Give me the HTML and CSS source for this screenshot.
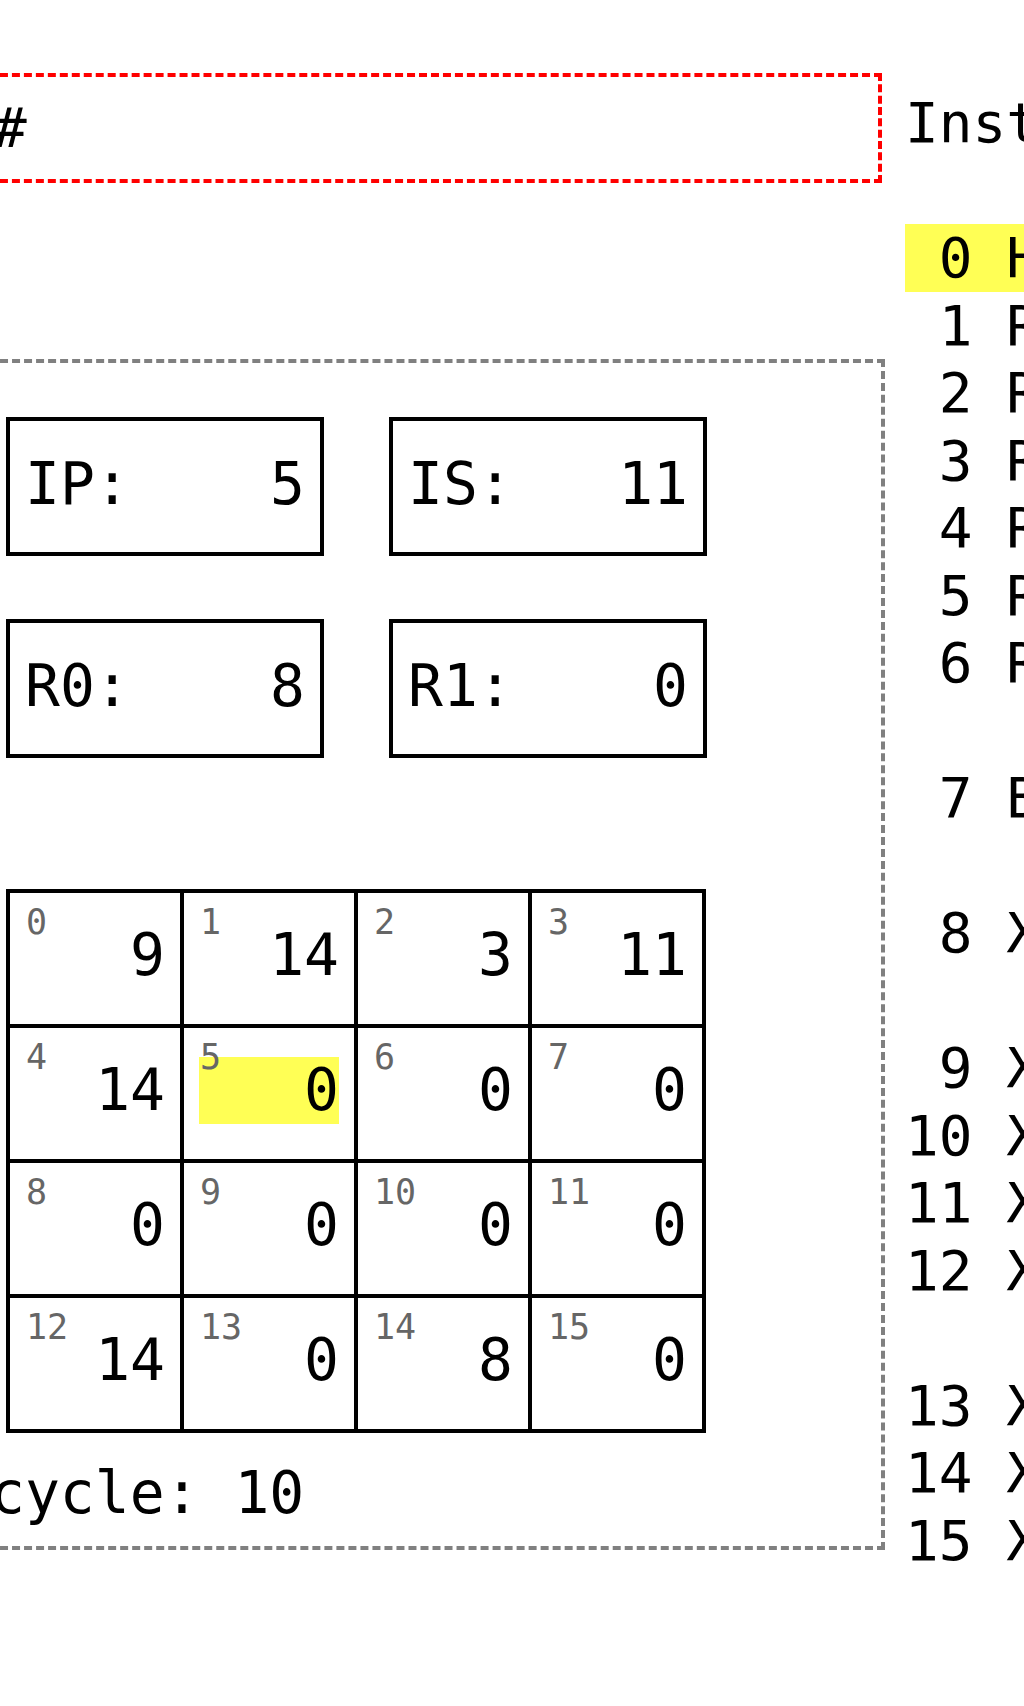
FILE: index.html
```html
<!DOCTYPE html>
<html lang="en">
<head>
  <meta charset="UTF-8">
  <meta name="viewport" content="width=device-width, initial-scale=1.0">
  <title>Tiny Machine</title>
  <link rel="stylesheet" href="styles.css">
</head>
<body>
  <div class="page">
    <div class="machine">
      <div class="program">#</div>

      <div class="state">
        <div class="registers">
          <div class="reg"><span>IP:</span><span>5</span></div>
          <div class="reg"><span>IS:</span><span>11</span></div>
          <div class="reg"><span>R0:</span><span>8</span></div>
          <div class="reg"><span>R1:</span><span>0</span></div>
        </div>

        <div class="memory">
          <div class="cell"><span class="addr">0</span><div class="val">9</div></div>
          <div class="cell"><span class="addr">1</span><div class="val">14</div></div>
          <div class="cell"><span class="addr">2</span><div class="val">3</div></div>
          <div class="cell"><span class="addr">3</span><div class="val">11</div></div>
          <div class="cell"><span class="addr">4</span><div class="val">14</div></div>
          <div class="cell"><span class="addr">5</span><div class="val current">0</div></div>
          <div class="cell"><span class="addr">6</span><div class="val">0</div></div>
          <div class="cell"><span class="addr">7</span><div class="val">0</div></div>
          <div class="cell"><span class="addr">8</span><div class="val">0</div></div>
          <div class="cell"><span class="addr">9</span><div class="val">0</div></div>
          <div class="cell"><span class="addr">10</span><div class="val">0</div></div>
          <div class="cell"><span class="addr">11</span><div class="val">0</div></div>
          <div class="cell"><span class="addr">12</span><div class="val">14</div></div>
          <div class="cell"><span class="addr">13</span><div class="val">0</div></div>
          <div class="cell"><span class="addr">14</span><div class="val">8</div></div>
          <div class="cell"><span class="addr">15</span><div class="val">0</div></div>
        </div>

        <div class="cycle">cycle: 10</div>
      </div>
    </div>

    <div class="listing">
      <div class="listing-title">Instructions</div>
      <div class="op current"><span class="num">0</span><span class="text">HALT</span></div>
      <div class="op"><span class="num">1</span><span class="text">R0 = R0 + 1</span></div>
      <div class="op"><span class="num">2</span><span class="text">R0 = R0 - 1</span></div>
      <div class="op"><span class="num">3</span><span class="text">R1 = R1 + 1</span></div>
      <div class="op"><span class="num">4</span><span class="text">R1 = R1 - 1</span></div>
      <div class="op"><span class="num">5</span><span class="text">R0 = R0 + R1</span></div>
      <div class="op"><span class="num">6</span><span class="text">R0 = R0 - R1, or 0 if negative</span></div>
      <div class="op"><span class="num">7</span><span class="text">BEEP, then print R0 to screen</span></div>
      <div class="op"><span class="num">8</span><span class="text">X: print X, then wait for key</span></div>
      <div class="op"><span class="num">9</span><span class="text">X: R0 = [X]</span></div>
      <div class="op"><span class="num">10</span><span class="text">X: R1 = [X]</span></div>
      <div class="op"><span class="num">11</span><span class="text">X: [X] = R0</span></div>
      <div class="op"><span class="num">12</span><span class="text">X: swap R0 with the value [X]</span></div>
      <div class="op"><span class="num">13</span><span class="text">X: IP = X</span></div>
      <div class="op"><span class="num">14</span><span class="text">X: IP = X if R0=0</span></div>
      <div class="op"><span class="num">15</span><span class="text">X: IP = X if R0≠0</span></div>
    </div>
  </div>
</body>
</html>
```

FILE: styles.css
```css
/* Global */
* {
  margin: 0;
  padding: 0;
  box-sizing: border-box;
}

html,
body {
  overflow: hidden;
}

body {
  background: #fff;
  color: #000;
  font-family: "DejaVu Sans Mono", monospace;
}

.page {
  display: flex;
  gap: 20px;
  align-items: flex-start;
}

/* Left side: program input + machine state */
.machine {
  flex: none;
  width: 909px;
  margin-left: -24px;
  padding-top: 73px;
}

.program {
  margin-right: 3px;
  margin-bottom: 176px;
  padding: 17px 13px;
  border: 4px dashed #ff0000;
  font-size: 56px;
  line-height: 67.5px;
}

.state {
  padding: 54px 0 19px 10px;
  border: 4px dashed #808080;
}

.registers {
  display: grid;
  grid-template-columns: 318px 318px;
  column-gap: 65px;
  row-gap: 63px;
  margin-left: 16px;
}

.reg {
  display: flex;
  justify-content: space-between;
  padding: 30px 15px 34px;
  border: 4px solid #000;
  font-size: 58px;
  line-height: 67px;
}

/* Memory grid */
.memory {
  display: grid;
  grid-template-columns: repeat(4, 170px);
  grid-auto-rows: 131px;
  gap: 4px;
  width: max-content;
  margin: 131px 0 0 16px;
  padding: 4px;
  background: #000;
}

.cell {
  position: relative;
  background: #fff;
  padding: 29px 15px 0;
}

.addr {
  position: absolute;
  top: 9px;
  left: 16px;
  color: #666;
  font-size: 35px;
}

.val {
  text-align: right;
  font-size: 58px;
  line-height: 67px;
}

.val.current {
  background: #ffff55;
}

.cycle {
  margin-top: 27px;
  font-size: 58px;
  line-height: 67px;
}

/* Right side: instruction listing */
.listing {
  flex: none;
  width: 760px;
  padding-top: 89px;
  font-size: 56px;
  line-height: 67.5px;
}

.listing-title {
  margin-bottom: 67.5px;
}

.op {
  display: flex;
  align-items: flex-start;
}

.op.current {
  background: #ffff55;
}

.num {
  flex: none;
  width: 2ch;
  text-align: right;
}

.text {
  width: 18ch;
  margin-left: 1ch;
  padding-left: 2ch;
  text-indent: -2ch;
  box-sizing: content-box;
}
```
